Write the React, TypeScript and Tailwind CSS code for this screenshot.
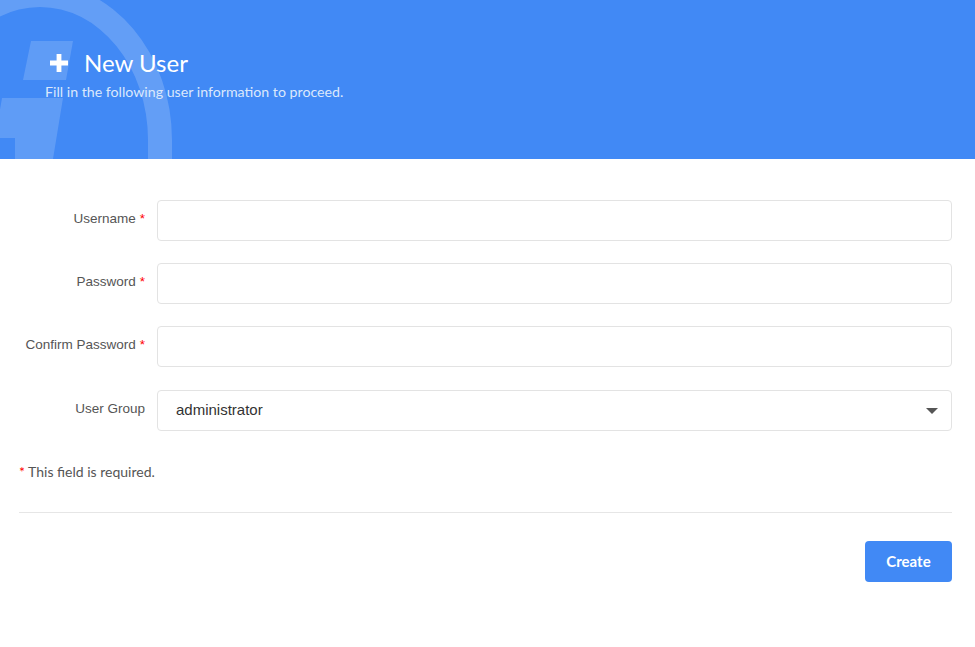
import React from 'react';

const sans = { fontFamily: 'Lato, "Noto Sans", sans-serif' };
const arial = { fontFamily: '"Liberation Sans", Arial, sans-serif' };

// faded emblem drawn behind the header text
const HeaderArt = () => (
  <svg className="absolute left-0 top-0" width="200" height="159" viewBox="0 0 200 159">
    <path
      fill="#ffffff"
      fillOpacity="0.18"
      fillRule="evenodd"
      d="M-92 140 A132 157 0 1 1 172 140 L172 159 L-92 159 Z M-68 140 A108 133 0 1 1 148 140 L148 159 L-68 159 Z"
    />
    <polygon fill="#ffffff" fillOpacity="0.16" points="31,41 73,41 66,80 23,80" />
    <polygon fill="#ffffff" fillOpacity="0.16" points="2,98 63,98 53,159 15,159 15,138 -5,138" />
  </svg>
);

const Field = ({ label, required, children }: { label: string; required?: boolean; children: React.ReactNode }) => (
  <div className="flex gap-3">
    <label className="w-[126px] shrink-0 pt-[9px] text-right text-[13.5px] leading-5 text-[#555]" style={arial}>
      {label}
      {required && <span className="ml-1 text-[#ff0000]">*</span>}
    </label>
    <div className="flex-1">{children}</div>
  </div>
);

const TextInput = ({ type = 'text' }: { type?: string }) => (
  <input
    type={type}
    className="block h-[41px] w-full rounded border border-[#e3e3e3] bg-white px-[18px] text-[15px] text-[#333] outline-none"
    style={arial}
  />
);

export default function App() {
  return (
    <div className="min-h-[647px] w-[975px] bg-white">
      <header className="relative h-[159px] overflow-hidden bg-[#4189f5]" style={sans}>
        <HeaderArt />
        <div className="relative px-[45px] pt-[47px]">
          <div className="flex items-center gap-4 pl-[5px]">
            <svg width="18" height="18" viewBox="0 0 18 18">
              <path d="M6.6 0h4.8v6.6H18v4.8h-6.6V18H6.6v-6.6H0V6.6h6.6z" fill="#ffffff" />
            </svg>
            <h1 className="text-[24px] leading-8 text-white">New User</h1>
          </div>
          <p className="mt-[3px] text-[14.2px] leading-5 text-[#dbe8fc]">Fill in the following user information to proceed.</p>
        </div>
      </header>

      <main className="pl-[19px] pr-[23px] pt-[41px]">
        <div className="flex flex-col gap-[22px]">
          <Field label="Username" required>
            <TextInput />
          </Field>
          <Field label="Password" required>
            <TextInput type="password" />
          </Field>
          <Field label="Confirm Password" required>
            <TextInput type="password" />
          </Field>
          <div className="mt-px">
            <Field label="User Group">
              <div className="relative">
                <select
                  defaultValue="administrator"
                  className="block h-[41px] w-full appearance-none rounded border border-[#e3e3e3] bg-white px-[18px] text-[15px] text-[#333] outline-none"
                  style={arial}
                >
                  <option value="administrator">administrator</option>
                  <option value="user">user</option>
                </select>
                <svg className="pointer-events-none absolute right-[14px] top-[18px]" width="12" height="6" viewBox="0 0 12 6">
                  <path d="M0 0h12L6 6z" fill="#555" />
                </svg>
              </div>
            </Field>
          </div>
        </div>

        <p className="mt-[31px] text-[14px] leading-5 text-[#555]" style={sans}>
          <span className="text-[#ff0000]">*</span> This field is required.
        </p>

        <hr className="mt-[30px] border-t border-[#e6e6e6]" />

        <div className="mt-[28px] flex justify-end">
          <button
            className="h-[41px] w-[87px] rounded bg-[#4189f5] text-[15px] font-bold text-white"
            style={sans}
          >
            Create
          </button>
        </div>
      </main>
    </div>
  );
}
